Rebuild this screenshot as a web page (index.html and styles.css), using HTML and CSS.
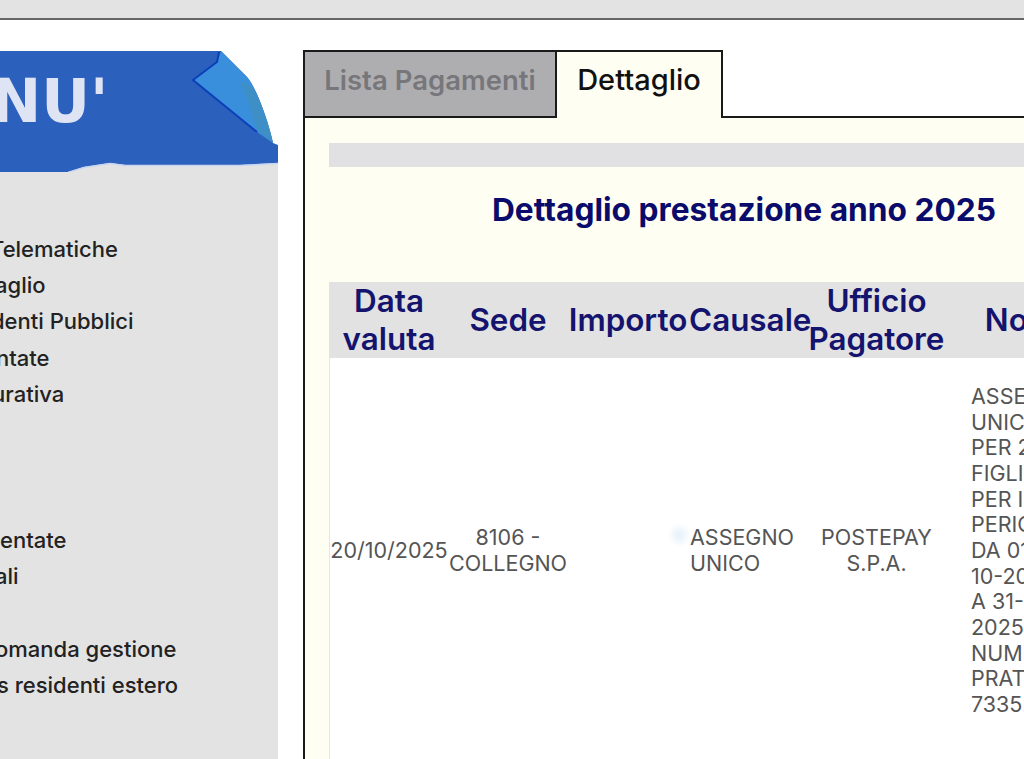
FILE: index.html
```html
<!DOCTYPE html>
<html lang="it">
<head>
<meta charset="utf-8">
<title>Dettaglio prestazione</title>
<link rel="stylesheet" href="styles.css">
</head>
<body>
<div class="topbar"></div>
<div class="page">
  <aside class="side">
    <div class="banner">
      <svg class="banner-art" width="279" height="122" viewBox="0 0 279 122" aria-hidden="true">
        <path d="M0 122H68L84 117 110 113 125 115H240L278 113V122Z" fill="#e3e3e3"/>
        <path d="M0 1H221L247 27C256 37 268 70 273 93L278 95V113L240 115H125L110 113 84 117 68 122H0Z" fill="#2c60bd"/>
        <path d="M221 1L247 27C256 37 268 70 273 93L257 82 193 30 217 12Z" fill="#3a8fdd"/>
        <path d="M252 36C260 50 270 75 273 93L257 80C250 60 248 50 240 32Z" fill="#3f8fb0" opacity=".55"/>
        <path d="M219 2L217 12 193 30 257 82" fill="none" stroke="#0d3fb8" stroke-width="2"/>
        <path d="M68 122.5L84 117.500 110 113.500 125 115.500H240L278 113.500" fill="none" stroke="#c9d6f2" stroke-width="1.500"/>
      </svg>
      <span class="banner-title">NU'</span>
    </div>
    <ul class="menu">
      <li class="clip-10">Telematiche</li>
      <li class="clip-5">aglio</li>
      <li class="clip-9">denti Pubblici</li>
      <li class="clip-4">ntate</li>
      <li class="clip-8">urativa</li>
      <li></li>
      <li></li>
      <li></li>
      <li>entate</li>
      <li class="clip-5">ali</li>
      <li></li>
      <li class="clip-5">omanda gestione</li>
      <li class="clip-3">s residenti estero</li>
    </ul>
  </aside>
  <main class="content">
    <div class="tabs">
      <div class="tab off">Lista Pagamenti</div>
      <div class="tab on">Dettaglio</div>
      <div class="tab-rest"></div>
    </div>
    <section class="panel">
      <div class="strip"></div>
      <h1 class="title">Dettaglio prestazione anno 2025</h1>
      <table class="grid">
        <thead>
          <tr>
            <th class="c1">Data valuta</th>
            <th class="c2">Sede</th>
            <th class="c3">Importo</th>
            <th class="c4">Causale</th>
            <th class="c5">Ufficio Pagatore</th>
            <th class="c6">Note</th>
          </tr>
        </thead>
        <tbody>
          <tr>
            <td>20/10/2025</td>
            <td>8106 - COLLEGNO</td>
            <td class="smudge"></td>
            <td class="left">ASSEGNO UNICO</td>
            <td>POSTEPAY S.P.A.</td>
            <td class="left note">ASSEGNO<br>UNICO<br>PER 2<br>FIGLI A<br>PER IL<br>PERIODO<br>DA 01-<br>10-2025<br>A 31-10-<br>2025<br>NUMERO<br>PRATICA<br>73352</td>
          </tr>
          <tr class="next">
            <td></td><td></td><td></td><td></td><td></td><td></td>
          </tr>
        </tbody>
      </table>
    </section>
  </main>
</div>
</body>
</html>
```
FILE: styles.css
```css
html, body {
  margin: 0;
  height: 759px;
  overflow: hidden;
  background: #fff;
  font-family: Inter, "Noto Sans", sans-serif;
}
.topbar {
  height: 18px;
  background: #e3e3e3;
  border-bottom: 2px solid #666;
}
.page {
  display: flex;
  gap: 25px;
  padding-top: 30px;
  align-items: flex-start;
}
.side {
  width: 278px;
  flex: none;
  background: #e3e3e3;
  height: 720px;
}
.banner {
  position: relative;
  height: 122px;
  background: #fff;
}
.banner-art {
  display: block;
}
.banner-title {
  position: absolute;
  left: -9px;
  top: 18px;
  font-family: "DejaVu Sans", sans-serif;
  font-size: 60px;
  line-height: 66px;
  font-weight: 700;
  color: #dfe4f4;
}
.menu {
  list-style: none;
  margin: 0;
  padding: 58.6px 0 0;
}
.menu li {
  height: 36.4px;
  line-height: 36px;
  font-size: 22px;
  font-weight: 500;
  color: #222;
  white-space: nowrap;
}
.menu .clip-3 { margin-left: -3px; }
.menu .clip-4 { margin-left: -4px; }
.menu .clip-5 { margin-left: -5px; }
.menu .clip-8 { margin-left: -8px; }
.menu .clip-9 { margin-left: -9px; }
.menu .clip-10 { margin-left: -10px; }
.content {
  flex: 1;
  min-width: 0;
}
.tabs {
  display: flex;
  height: 68px;
}
.tab {
  box-sizing: border-box;
  text-align: center;
  line-height: 56px;
  border: 2px solid #1a1a1a;
}
.tab.off {
  width: 252px;
  font-size: 27.5px;
  font-weight: 600;
  background: #aeaeb1;
  color: #77777b;
  border-right: 0;
}
.tab.on {
  width: 168px;
  font-size: 29px;
  font-weight: 500;
  background: #fffef2;
  color: #111;
  border-bottom: 0;
}
.tab-rest {
  flex: 1;
  border-bottom: 2px solid #1a1a1a;
}
.panel {
  background: #fffef2;
  border-left: 2px solid #1a1a1a;
  padding: 25px 0 0 24px;
  height: 640px;
}
.strip {
  height: 24px;
  background: #e1e1e3;
}
.title {
  margin: 0;
  padding: 23px 0 0;
  width: 830px;
  text-align: center;
  font-size: 31.7px;
  line-height: 40px;
  font-weight: 700;
  color: #0b0b6b;
  white-space: nowrap;
}
.grid {
  margin-top: 52px;
  width: 768px;
  border-collapse: collapse;
  table-layout: fixed;
  background: #fff;
}
.grid th {
  background: #e2e2e2;
  color: #14146e;
  font-size: 31.4px;
  line-height: 38px;
  font-weight: 600;
  height: 76px;
  padding: 0;
  text-align: center;
}
.grid td {
  padding: 26px 0 25px;
  text-align: center;
  font-size: 21.5px;
  line-height: 25.65px;
  font-weight: 400;
  color: #555;
}
.grid td:first-child {
  box-shadow: inset 1px 0 #e6e6e2;
}
.grid td.left {
  text-align: left;
  padding-left: 1px;
}
.grid td.note {
  padding-left: 26px;
}
.grid .next td {
  height: 40px;
  padding: 0;
}
.smudge {
  background: radial-gradient(circle at 92% 46%, #e4f1fb 0, #fff 12px);
}
.c1 { width: 120px; }
.c2 { width: 118px; }
.c3 { width: 122px; }
.c4 { width: 119px; }
.c5 { width: 137px; }
.c6 { width: 152px; }
```
